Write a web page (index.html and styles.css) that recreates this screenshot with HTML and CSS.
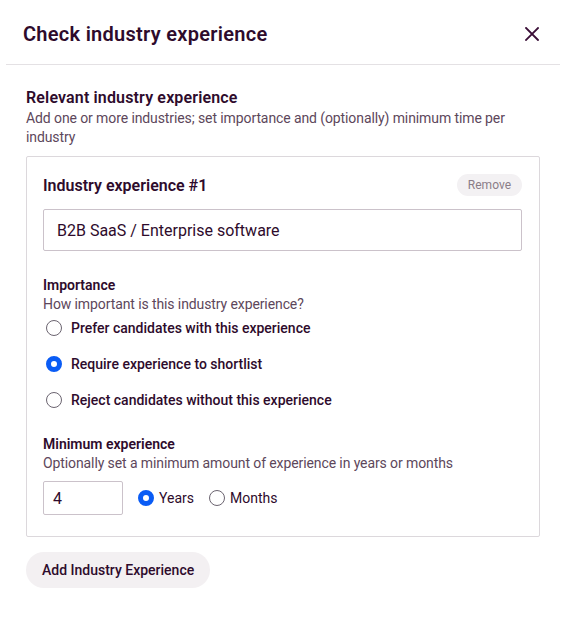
FILE: index.html
```html
<!DOCTYPE html>
<html lang="en">
<head>
<meta charset="utf-8">
<title>Check industry experience</title>
<link rel="stylesheet" href="styles.css">
</head>
<body>
<div class="dialog">
  <header class="dialog-header">
    <h1 class="dialog-title">Check industry experience</h1>
    <button class="close-btn" aria-label="Close">
      <svg width="14" height="14" viewBox="0 0 14 14"><path d="M1 1L13 13M13 1L1 13" stroke="currentColor" stroke-width="1.8" stroke-linecap="square" fill="none"/></svg>
    </button>
  </header>
  <main class="dialog-body">
    <h2 class="section-title">Relevant industry experience</h2>
    <p class="section-desc">Add one or more industries; set importance and (optionally) minimum time per industry</p>
    <div class="card">
      <div class="card-head">
        <h3 class="card-title">Industry experience #1</h3>
        <button class="remove-btn">Remove</button>
      </div>
      <div class="text-input">B2B SaaS / Enterprise software</div>
      <div class="group">
        <div class="group-label">Importance</div>
        <div class="group-desc">How important is this industry experience?</div>
        <div class="radio-list">
          <label class="radio"><span class="dot"></span>Prefer candidates with this experience</label>
          <label class="radio"><span class="dot checked"></span>Require experience to shortlist</label>
          <label class="radio"><span class="dot"></span>Reject candidates without this experience</label>
        </div>
      </div>
      <div class="group min-group">
        <div class="group-label">Minimum experience</div>
        <div class="group-desc">Optionally set a minimum amount of experience in years or months</div>
        <div class="min-row">
          <div class="num-input">4</div>
          <label class="radio inline"><span class="dot checked"></span>Years</label>
          <label class="radio inline"><span class="dot"></span>Months</label>
        </div>
      </div>
    </div>
    <button class="add-btn">Add Industry Experience</button>
  </main>
</div>
</body>
</html>
```
FILE: styles.css
```css
* { box-sizing: border-box; }
html, body { margin: 0; padding: 0; background: #fff; }
body {
  font-family: Roboto, "Liberation Sans", sans-serif;
  color: #2e0b2c;
}
.dialog { width: 564px; }
.dialog-header {
  display: flex;
  align-items: center;
  justify-content: space-between;
  height: 65px;
  margin: 0 4px 0 6px;
  padding: 3px 21px 0 17px;
  border-bottom: 1px solid #e4e1e4;
}
.dialog-title {
  margin: 0;
  font-size: 20px;
  font-weight: 600;
  letter-spacing: 0.28px;
}
.close-btn {
  background: none;
  border: 0;
  padding: 0;
  color: #3a0e37;
  display: flex;
  width: 14px;
  height: 14px;
}
.dialog-body { padding: 23px 24px 0 26px; }
.section-title {
  margin: 0;
  font-size: 16px;
  font-weight: 600;
  line-height: 20px;
  letter-spacing: 0.15px;
}
.section-desc {
  margin: 1px 0 0;
  font-size: 14px;
  line-height: 19px;
  color: #5d475b;
  padding-right: 10px;
  letter-spacing: -0.1px;
}
.card {
  margin-top: 9px;
  border: 1px solid #dcd8dc;
  border-radius: 2px;
  padding: 18px 17px 21px 16px;
}
.card-head {
  display: flex;
  align-items: center;
  justify-content: space-between;
}
.card-title {
  margin: 0;
  font-size: 16px;
  font-weight: 600;
  line-height: 22px;
}
.remove-btn {
  font-family: inherit;
  font-size: 12px;
  color: #8a7d88;
  background: #f3f1f3;
  border: 0;
  border-radius: 12px;
  height: 22px;
  padding: 0 11px;
  margin-top: -2px;
}
.text-input {
  margin-top: 12px;
  height: 42px;
  border: 1px solid #cbc2ca;
  border-radius: 2px;
  padding: 0 13px;
  display: flex;
  align-items: center;
  font-size: 16px;
}
.group { margin-top: 25px; }
.group-label {
  font-size: 14px;
  font-weight: 600;
  line-height: 18px;
}
.group-desc {
  margin-top: 1px;
  font-size: 14px;
  line-height: 18px;
  color: #5d475b;
  letter-spacing: -0.1px;
}
.radio-list {
  display: flex;
  flex-direction: column;
  gap: 18px;
  margin-top: 6px;
}
.radio {
  display: flex;
  align-items: center;
  gap: 9px;
  font-size: 14px;
  font-weight: 500;
  line-height: 18px;
  padding-left: 3px;
}
.dot {
  width: 16px;
  height: 16px;
  border-radius: 50%;
  border: 1px solid #6b6470;
  flex: none;
  background: #fff;
}
.dot.checked {
  border: 5px solid #0a5cf5;
  background: #fff;
}
.min-group { margin-top: 26px; }
.min-row {
  display: flex;
  align-items: center;
  margin-top: 9px;
}
.num-input {
  width: 80px;
  height: 34px;
  border: 1px solid #cbc2ca;
  border-radius: 2px;
  padding: 0 9px;
  display: flex;
  align-items: center;
  font-size: 16px;
  margin-right: 15px;
}
.radio.inline { gap: 5px; padding-left: 0; margin-right: 15px; font-weight: 400; font-size: 14px; }
.add-btn {
  margin-top: 15px;
  font-family: inherit;
  font-size: 14px;
  font-weight: 500;
  color: #2e0b2c;
  background: #f3f0f2;
  border: 0;
  border-radius: 18px;
  height: 36px;
  padding: 0 16px;
}
```
